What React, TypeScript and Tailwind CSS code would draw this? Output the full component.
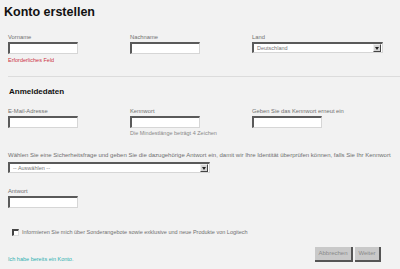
import type { ReactNode } from 'react'

/** Label + field block used in the three-column rows. */
function Field({ label, children, hint }: { label: string; children: ReactNode; hint?: ReactNode }) {
  return (
    <div className="flex flex-col">
      <span className="whitespace-nowrap text-[5.8px] leading-[7px] text-[#707070]">{label}</span>
      <div className="mt-[1px]">{children}</div>
      {hint}
    </div>
  )
}

function TextBox({ className = 'w-[70px]' }: { className?: string }) {
  return (
    <div
      className={`h-[12px] border-t-2 border-l-2 border-r border-b border-t-[#5a5a5a] border-l-[#5a5a5a] border-r-[#d6d6d6] border-b-[#d6d6d6] bg-white ${className}`}
    />
  )
}

function SelectBox({ value, className }: { value: string; className: string }) {
  return (
    <div
      className={`flex h-[11px] items-center border-t-2 border-l-2 border-r border-b border-t-[#5a5a5a] border-l-[#5a5a5a] border-r-[#d6d6d6] border-b-[#d6d6d6] bg-white ${className}`}
    >
      <span className="flex-1 pl-[3px] text-[5.5px] leading-[7px] text-[#777]">{value}</span>
      <span className="mr-[1px] flex h-[8px] w-[8px] items-center justify-center border border-t-[#eee] border-l-[#eee] border-r-[#444] border-b-[#444] bg-[#d4d4d4]">
        <svg width="4" height="3" viewBox="0 0 4 3">
          <path d="M0 0h4L2 3z" fill="#222" />
        </svg>
      </span>
    </div>
  )
}

export default function App() {
  return (
    <div
      className="h-[269px] w-[400px] overflow-hidden bg-[#f2f2f2]"
      style={{ fontFamily: '"Liberation Sans", Arial, sans-serif' }}
    >
      <h1 className="pl-[4px] pt-[4px] text-[12.5px] font-bold leading-[16px] text-[#111]">Konto erstellen</h1>

      <div className="mt-[14px] grid grid-cols-[122px_122px_1fr] pl-[8px]">
        <Field
          label="Vorname"
          hint={<span className="mt-[3px] text-[5.5px] leading-[6px] text-[#cc3344]">Erforderliches Feld</span>}
        >
          <TextBox />
        </Field>
        <Field label="Nachname">
          <TextBox />
        </Field>
        <Field label="Land">
          <SelectBox value="Deutschland" className="w-[131px]" />
        </Field>
      </div>

      <div className="ml-[8px] mt-[13px] h-px bg-[#dcdcdc]" />

      <h2 className="pl-[9px] pt-[10px] text-[8px] font-bold leading-[10px] text-[#111]">Anmeldedaten</h2>

      <div className="mt-[11px] grid grid-cols-[122px_122px_1fr] pl-[8px]">
        <Field label="E-Mail-Adresse">
          <TextBox />
        </Field>
        <Field
          label="Kennwort"
          hint={
            <span className="mt-[2px] whitespace-nowrap text-[5.5px] leading-[6px] text-[#888]">
              Die Mindestlänge beträgt 4 Zeichen
            </span>
          }
        >
          <TextBox />
        </Field>
        <Field label="Geben Sie das Kennwort erneut ein">
          <TextBox />
        </Field>
      </div>

      <p className="mt-[16px] whitespace-nowrap pl-[8px] text-[6px] leading-[7px] text-[#707070]">
        Wählen Sie eine Sicherheitsfrage und geben Sie die dazugehörige Antwort ein, damit wir Ihre Identität überprüfen können, falls Sie Ihr Kennwort
      </p>
      <div className="mt-[3px] pl-[8px]">
        <SelectBox value="-- Auswählen --" className="w-[202px]" />
      </div>

      <div className="mt-[15px] pl-[8px]">
        <Field label="Antwort">
          <TextBox />
        </Field>
      </div>

      <label className="mt-[21px] flex items-center gap-[3px] pl-[12px]">
        <span className="h-[7px] w-[7px] border-t-2 border-l-2 border-r border-b border-t-[#444] border-l-[#444] border-r-[#ddd] border-b-[#ddd] bg-white" />
        <span className="text-[5.5px] leading-[7px] text-[#707070]">
          Informieren Sie mich über Sonderangebote sowie exklusive und neue Produkte von Logitech
        </span>
      </label>

      <div className="mt-[11px] flex items-end justify-between pl-[8px] pr-[19px]">
        <a className="mb-[-1px] text-[5.5px] leading-[7px] text-[#2eb0b0]">Ich habe bereits ein Konto.</a>
        <div className="flex gap-[2px]">
          <button
            type="button"
            className="h-[15px] w-[38px] border-r-2 border-b-2 border-r-[#555] border-b-[#555] bg-[#c9c9c9] text-[6px] text-[#8a8a8a]"
          >
            Abbrechen
          </button>
          <button
            type="button"
            className="h-[15px] w-[26px] border-r-2 border-b-2 border-r-[#555] border-b-[#555] bg-[#c9c9c9] text-[6px] text-[#8a8a8a]"
          >
            Weiter
          </button>
        </div>
      </div>
    </div>
  )
}
